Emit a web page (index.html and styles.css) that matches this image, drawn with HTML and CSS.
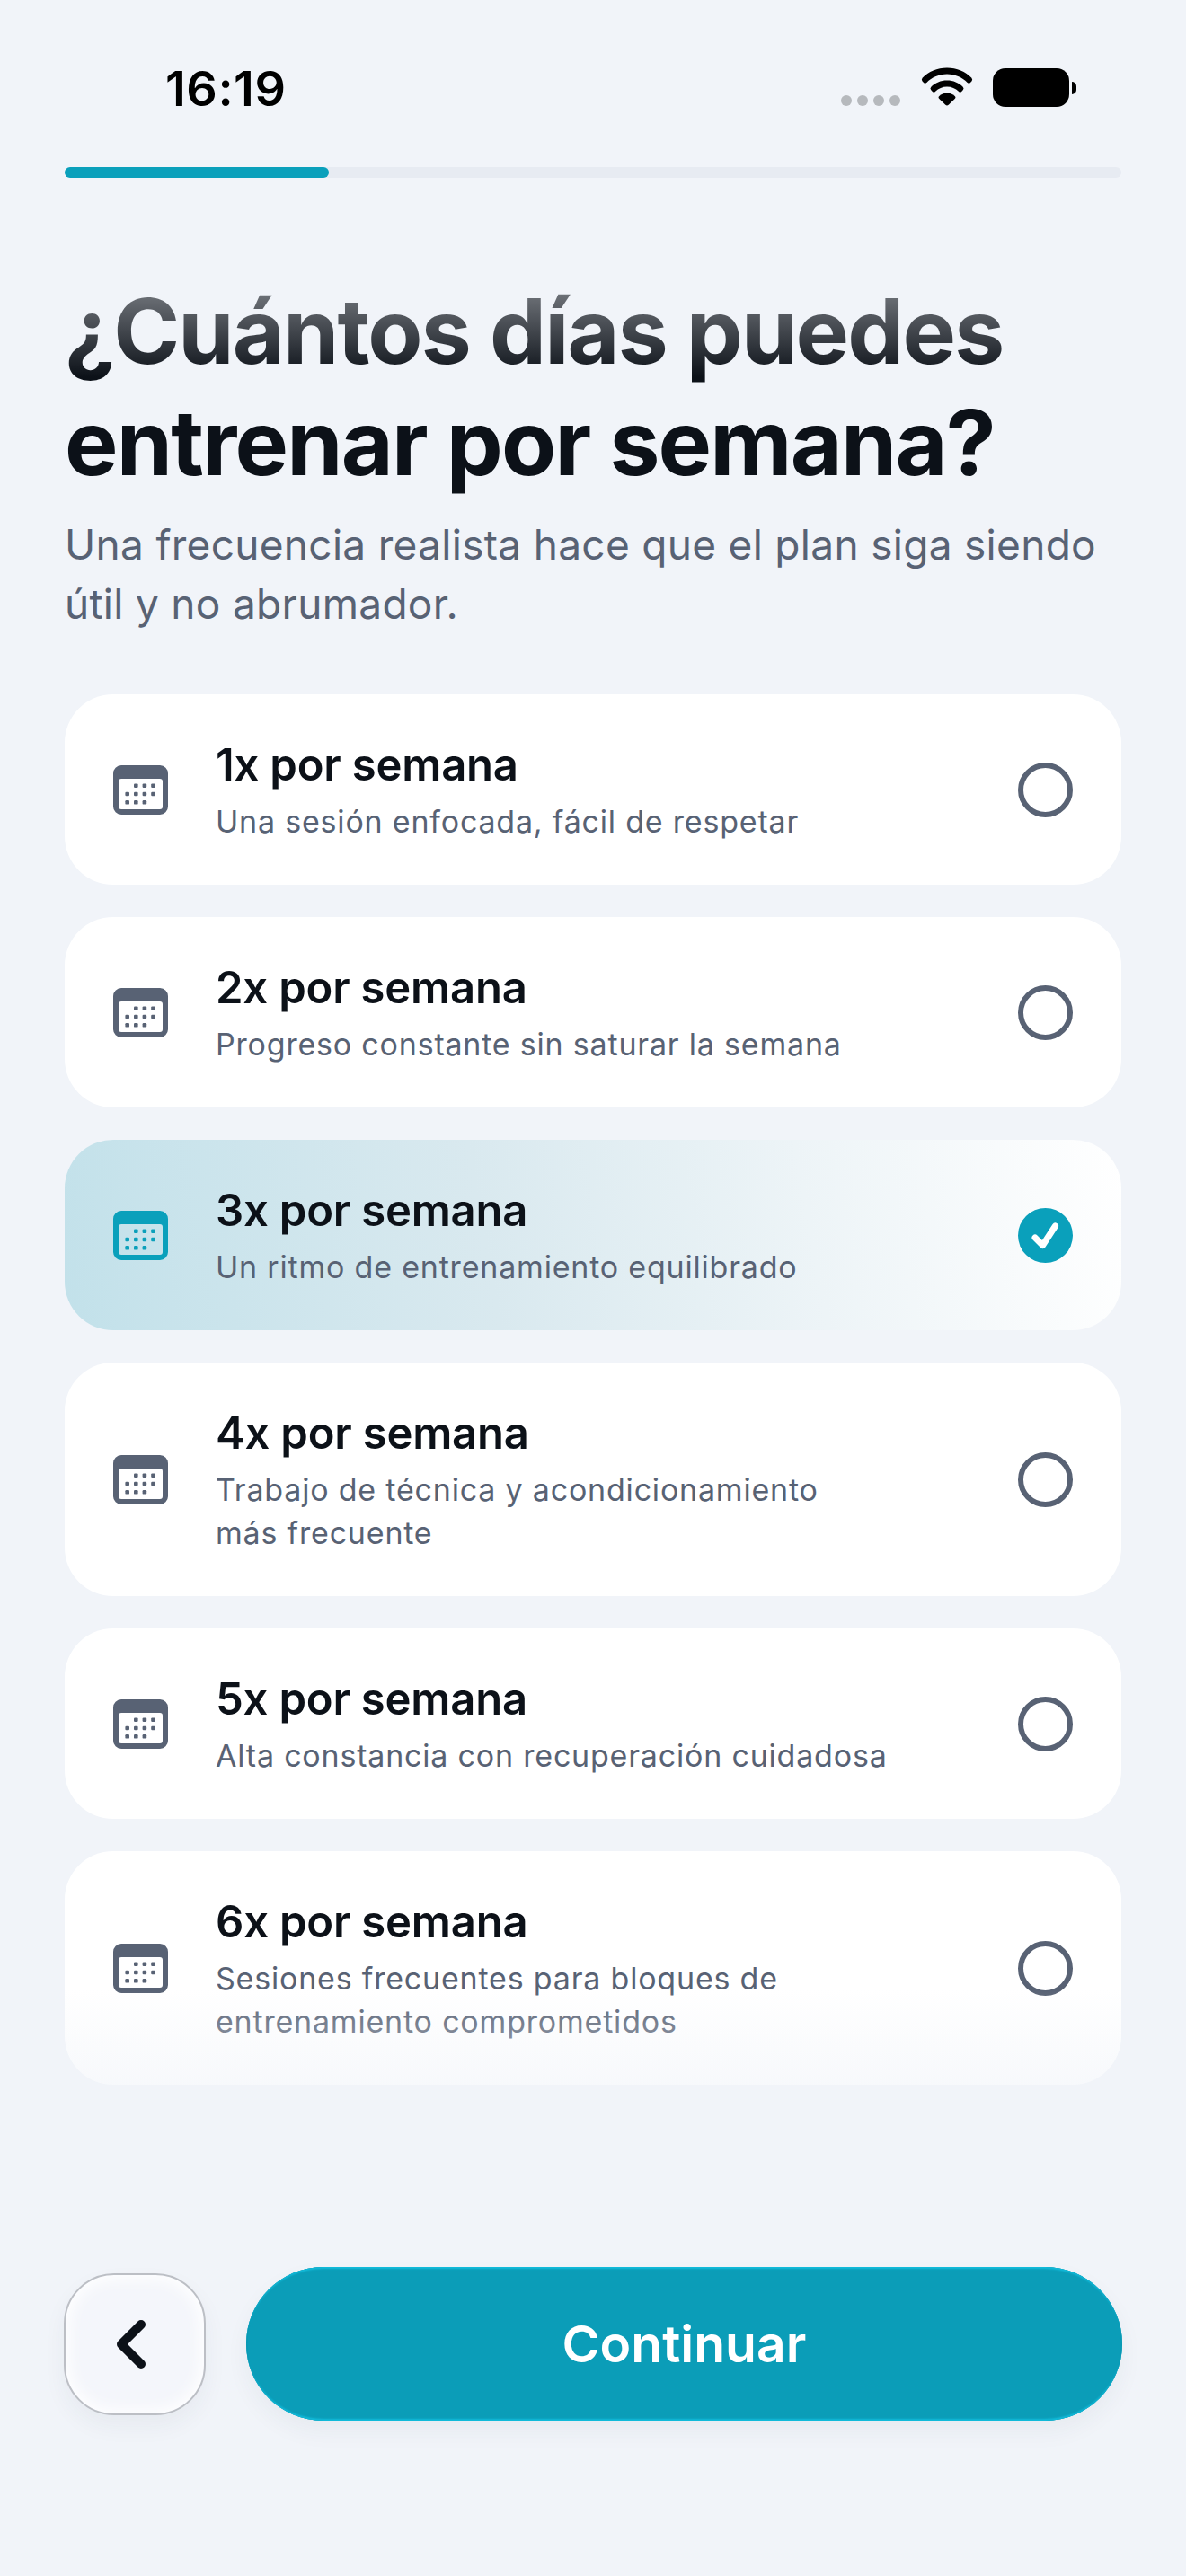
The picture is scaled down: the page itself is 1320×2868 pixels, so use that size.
FILE: index.html
```html
<!DOCTYPE html>
<html lang="es">
<head>
<meta charset="utf-8">
<title>Frecuencia</title>
<link rel="stylesheet" href="styles.css">
</head>
<body>
<svg class="defs" width="0" height="0" aria-hidden="true">
  <symbol id="cal" viewBox="0 0 61 55">
    <path fill-rule="evenodd" d="M9 0h43a9 9 0 0 1 9 9v37a9 9 0 0 1-9 9H9a9 9 0 0 1-9-9V9a9 9 0 0 1 9-9ZM9 15a3 3 0 0 0-3 3v28a3 3 0 0 0 3 3h43a3 3 0 0 0 3-3V18a3 3 0 0 0-3-3Z"/>
    <rect x="23" y="20.400" width="4.600" height="4.600" rx="1.200"/><rect x="32.600" y="20.400" width="4.600" height="4.600" rx="1.200"/><rect x="42.200" y="20.400" width="4.600" height="4.600" rx="1.200"/>
    <rect x="13.400" y="29.700" width="4.600" height="4.600" rx="1.200"/><rect x="23" y="29.700" width="4.600" height="4.600" rx="1.200"/><rect x="32.600" y="29.700" width="4.600" height="4.600" rx="1.200"/><rect x="42.200" y="29.700" width="4.600" height="4.600" rx="1.200"/>
    <rect x="13.400" y="39" width="4.600" height="4.600" rx="1.200"/><rect x="23" y="39" width="4.600" height="4.600" rx="1.200"/><rect x="32.600" y="39" width="4.600" height="4.600" rx="1.200"/>
  </symbol>
</svg>
<main class="screen">
  <header class="status">
    <span class="time">16:19</span>
    <div class="status-icons">
      <div class="dots"><i></i><i></i><i></i><i></i></div>
      <svg class="wifi" width="58" height="43" viewBox="0 0 58 42"><path d="M29 0C18 0 8.500 4.200 1.600 11.200a3 3 0 0 0 0 3.800l1.200 1.300a2.500 2.500 0 0 0 3.500.1C12.300 10.500 20.200 7 29 7s16.700 3.500 22.700 9.400a2.500 2.500 0 0 0 3.500-.1l1.200-1.300a3 3 0 0 0 0-3.800C49.500 4.200 40 0 29 0Z"/><path d="M29 14c-7 0-13.200 2.700-17.700 7.200a2.600 2.600 0 0 0 0 3.600l1.300 1.400a2.500 2.500 0 0 0 3.500 0C19.500 23 24 21 29 21s9.500 2 12.900 5.200a2.500 2.500 0 0 0 3.500 0l1.300-1.400a2.600 2.600 0 0 0 0-3.600C42.200 16.700 36 14 29 14Z"/><path d="M29 28c-3.400 0-6.500 1.300-8.700 3.400a2.200 2.200 0 0 0 0 3.100l7 6.700a2.500 2.500 0 0 0 3.400 0l7-6.700a2.200 2.200 0 0 0 0-3.100C35.500 29.300 32.400 28 29 28Z"/></svg>
      <div class="battery"><div class="battery-body"></div><div class="battery-cap"></div></div>
    </div>
  </header>
  <div class="progress"><div class="progress-fill"></div></div>
  <h1 class="title">¿Cuántos días puedes entrenar por semana?</h1>
  <p class="lead">Una frecuencia realista hace que el plan siga siendo útil y no abrumador.</p>
  <section class="options">
    <article class="card">
      <svg class="cal"><use href="#cal"/></svg>
      <div class="copy"><h2>1x por semana</h2><p>Una sesión enfocada, fácil de respetar</p></div>
      <span class="radio"></span>
    </article>
    <article class="card">
      <svg class="cal"><use href="#cal"/></svg>
      <div class="copy"><h2>2x por semana</h2><p>Progreso constante sin saturar la semana</p></div>
      <span class="radio"></span>
    </article>
    <article class="card card-on">
      <svg class="cal"><use href="#cal"/></svg>
      <div class="copy"><h2>3x por semana</h2><p>Un ritmo de entrenamiento equilibrado</p></div>
      <svg class="check" width="61" height="61" viewBox="0 0 61 61"><circle cx="30.500" cy="30.500" r="30.500"/><path d="M19 33l8.500 8.500L41.500 20"/></svg>
    </article>
    <article class="card">
      <svg class="cal"><use href="#cal"/></svg>
      <div class="copy"><h2>4x por semana</h2><p>Trabajo de técnica y acondicionamiento<br>más frecuente</p></div>
      <span class="radio"></span>
    </article>
    <article class="card">
      <svg class="cal"><use href="#cal"/></svg>
      <div class="copy"><h2>5x por semana</h2><p>Alta constancia con recuperación cuidadosa</p></div>
      <span class="radio"></span>
    </article>
    <article class="card">
      <svg class="cal"><use href="#cal"/></svg>
      <div class="copy"><h2>6x por semana</h2><p>Sesiones frecuentes para bloques de<br>entrenamiento comprometidos</p></div>
      <span class="radio"></span>
    </article>
  </section>
  <footer class="actions">
    <button class="back" aria-label="Atrás"><svg width="34" height="54" viewBox="0 0 34 54"><path d="M28 5L6 27l22 22"/></svg></button>
    <button class="next">Continuar</button>
  </footer>
  <div class="fade-top"></div>
  <div class="fade-bottom"></div>
</main>
</body>
</html>
```
FILE: styles.css
```css
* { box-sizing: border-box; margin: 0; padding: 0; }
html, body { width: 1320px; height: 2868px; background: #f1f4f9; overflow: hidden; }
body { font-family: Inter, "Liberation Sans", sans-serif; color: #0c1118; }
.defs { position: absolute; }
.screen { position: relative; width: 1320px; height: 2868px; padding: 0 72px; display: flex; flex-direction: column; }
.status { height: 186px; padding: 68px 0 0 112px; display: flex; justify-content: space-between; align-items: flex-start; }
.time { font-size: 54px; line-height: 62px; font-weight: 600; color: #000; letter-spacing: 0.5px; }
.status-icons { display: flex; align-items: flex-start; padding: 7px 50px 0 0; }
.dots { display: flex; gap: 6px; margin: 31px 23px 0 0; }
.dots i { width: 12px; height: 12px; border-radius: 50%; background: #b6b9bd; }
.wifi { fill: #000; margin-right: 22px; }
.battery { display: flex; align-items: center; margin-top: 1px; }
.battery-body { width: 85px; height: 43px; border-radius: 14px; background: #000; }
.battery-cap { width: 5px; height: 14px; border-radius: 0 7px 7px 0; margin-left: 3px; background: #000; }
.progress { height: 12px; border-radius: 6px; background: #e7ebf2; }
.progress-fill { width: 294px; height: 12px; border-radius: 6px; background: #0aa0bb; }
.title { margin-top: 109px; font-size: 100px; line-height: 124px; font-weight: 700; letter-spacing: -1.8px; color: #0c1118; }
.lead { margin-top: 18px; font-size: 46px; line-height: 66px; color: #586274; letter-spacing: 0.3px; }
.options { margin-top: 68px; display: flex; flex-direction: column; gap: 36px; }
.card { display: flex; align-items: center; min-height: 212px; padding: 50px 54px; border-radius: 54px; background: #fff; }
.card-on { background: linear-gradient(80deg, #c2e1ea 0%, #d9e9ef 40%, #edf4f7 70%, #fff 100%); }
.cal { flex: none; width: 61px; height: 55px; fill: #586274; }
.card-on .cal { fill: #0aa0bb; }
.copy { flex: 1; min-width: 0; padding: 0 60px 0 53px; }
.copy h2 { font-size: 49px; line-height: 58px; font-weight: 600; letter-spacing: -0.2px; color: #0c1118; }
.copy p { margin: 10px 0 -4px; font-size: 34px; line-height: 48px; color: #586274; letter-spacing: 0.8px; }
.radio { flex: none; width: 61px; height: 61px; border: 6px solid #586274; border-radius: 50%; }
.check { flex: none; }
.check circle { fill: #0aa0bb; }
.check path { fill: none; stroke: #fff; stroke-width: 7px; stroke-linecap: round; stroke-linejoin: round; }
.actions { margin: auto 0 173px -1px; width: 1178px; height: 171px; display: flex; align-items: center; justify-content: space-between; }
.back { width: 158px; height: 158px; border-radius: 56px; border: 2px solid #bcbfc5; background: #f4f6fb; box-shadow: inset 0 0 18px 4px #fff, 0 12px 26px rgba(40,50,70,.05); display: flex; align-items: center; justify-content: center; }
.back svg { fill: none; stroke: #0c1118; stroke-width: 10px; stroke-linecap: round; stroke-linejoin: round; margin-left: -8px; }
.next { width: 975px; height: 171px; border-radius: 86px; border: 0; background: #0b9db8; color: #fff; font: 600 57px Inter, sans-serif; box-shadow: inset 0 3px 2px -1px #12bcdc, inset 0 -3px 2px -1px #12bcdc, inset 0 0 0 1px #0a93ad, 0 12px 26px rgba(40,50,70,.05); }
.fade-top { position: absolute; left: 0; top: 200px; width: 100%; height: 220px; background: linear-gradient(#f1f4f9, rgba(241,244,249,0)); }
.fade-bottom { position: absolute; left: 0; top: 2215px; width: 100%; height: 185px; background: linear-gradient(rgba(241,244,249,0), #f1f4f9); }
```
